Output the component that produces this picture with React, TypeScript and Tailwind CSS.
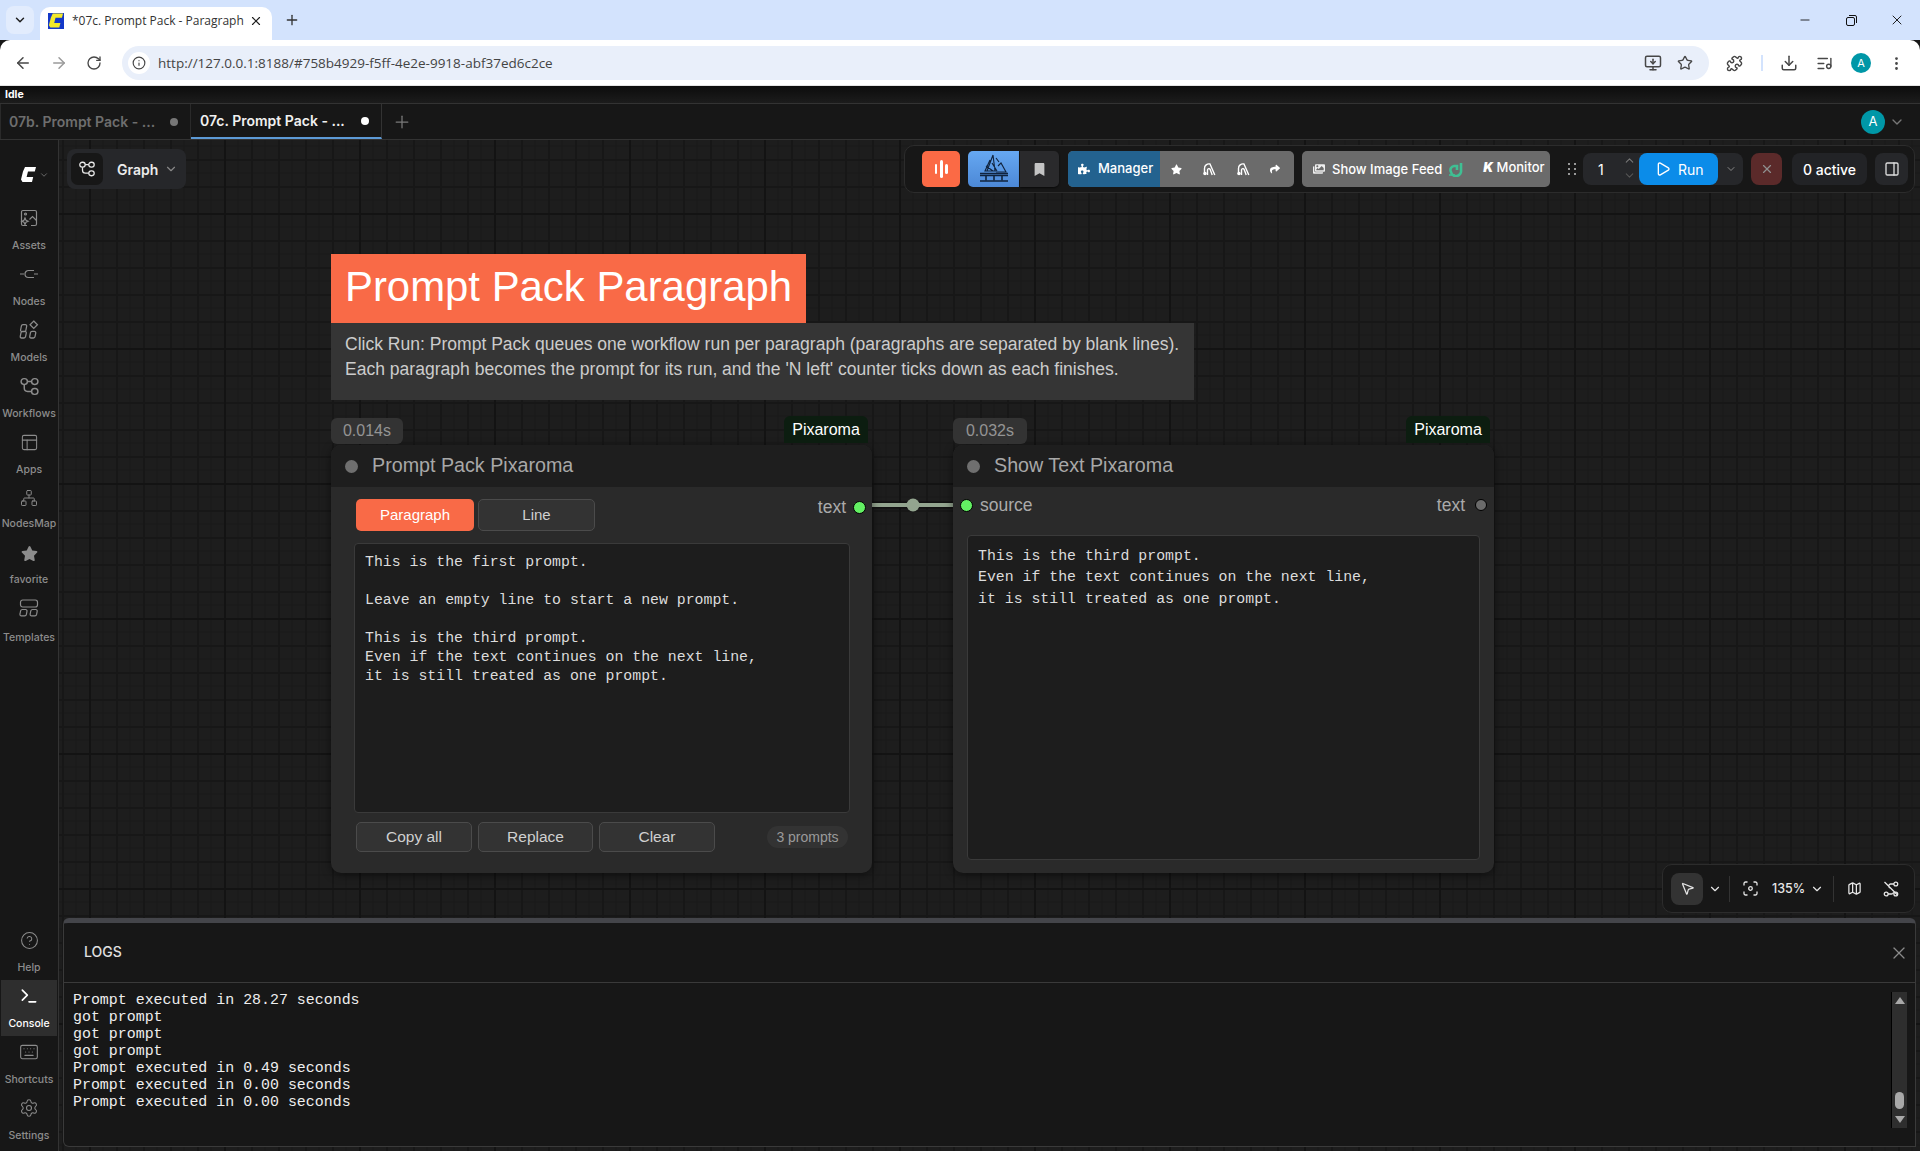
import React from "react";
import {
  ArrowLeft, ArrowRight, RotateCw, Info, Star, X, Plus, ChevronDown, ChevronUp, Minus, Download, Play, PanelRight,
  CircleHelp, Terminal, Keyboard, Settings, PanelsTopLeft, Network, MousePointer2, Map as MapIcon, EllipsisVertical, MonitorDown, Puzzle, ListMusic,
} from "lucide-react";
import { FaPuzzlePiece, FaStar, FaShare, FaBookmark, FaImages } from "react-icons/fa";

const GraphIcon = ({ size = 20 }: { size?: number }) => (
  <svg width={size} height={size} viewBox="0 0 20 20" fill="none" stroke="currentColor" strokeWidth="1.4">
    <rect x="2" y="2.5" width="6" height="5.5" rx="2.7" />
    <rect x="12" y="2.5" width="6" height="5.5" rx="2.7" />
    <rect x="12" y="12" width="6" height="5.5" rx="2.7" />
    <path d="M8 5.2h4M5 8v3.5a3.2 3.2 0 0 0 3.2 3.2H12" />
  </svg>
);
const AssetsIcon = () => (
  <svg width="18" height="18" viewBox="0 0 18 18" fill="none" stroke="currentColor" strokeWidth="1.2">
    <path d="M7 16.5H3a1.5 1.5 0 0 1-1.5-1.5V3A1.5 1.5 0 0 1 3 1.5h12A1.5 1.5 0 0 1 16.5 3v12a1.5 1.5 0 0 1-1.5 1.5h-4" />
    <path d="M9.5 10.5l3-3 4 4" />
    <circle cx="5.5" cy="5" r="1" />
    <path d="M5 9l1 2.2 2.2 1-2.2 1-1 2.3-1-2.3-2.2-1 2.2-1z" />
  </svg>
);
const NodesIcon = () => (
  <svg width="20" height="14" viewBox="0 0 20 14" fill="none" stroke="currentColor" strokeWidth="1.2">
    <path d="M1 7h4M15 7h4" />
    <path d="M15 3.5H9.5A3.5 3.5 0 0 0 6 7a3.5 3.5 0 0 0 3.5 3.5H15" />
  </svg>
);
const ModelsIcon = () => (
  <svg width="20" height="20" viewBox="0 0 19 19" fill="none" stroke="currentColor" strokeWidth="1.2">
    <path d="M3 7.5l.8-4a1.5 1.5 0 0 1 1.5-1.2h2.2a1.3 1.3 0 0 1 1.3 1.6l-.8 4a1.5 1.5 0 0 1-1.5 1.1H4.3A1.3 1.3 0 0 1 3 7.5z" transform="translate(-1.5 2)" />
    <path d="M1.2 15.5l.7-3.5a1.5 1.5 0 0 1 1.5-1.2h2.2a1.3 1.3 0 0 1 1.3 1.6l-.7 3.5a1.5 1.5 0 0 1-1.5 1.2H2.5a1.3 1.3 0 0 1-1.3-1.6z" />
    <path d="M10.2 15.5l.7-3.5a1.5 1.5 0 0 1 1.5-1.2h2.2a1.3 1.3 0 0 1 1.3 1.6l-.7 3.5a1.5 1.5 0 0 1-1.5 1.2h-2.2a1.3 1.3 0 0 1-1.3-1.6z" />
    <path d="M14 1l3.5 3.5L14 8l-3.5-3.5z" />
  </svg>
);
const TemplatesIcon = () => (
  <svg width="20" height="18" viewBox="0 0 20 18" fill="none" stroke="currentColor" strokeWidth="1.2">
    <rect x="1.5" y="1" width="17" height="7" rx="2.2" />
    <path d="M1 15l.6-3.2A1.8 1.8 0 0 1 3.4 10.5h3.2A1.4 1.4 0 0 1 8 12.2l-.6 3.2a1.8 1.8 0 0 1-1.8 1.4H2.4A1.4 1.4 0 0 1 1 15z" />
    <path d="M11.2 15l.6-3.2a1.8 1.8 0 0 1 1.8-1.3h3.2a1.4 1.4 0 0 1 1.4 1.7l-.6 3.2a1.8 1.8 0 0 1-1.8 1.4h-3.2a1.4 1.4 0 0 1-1.4-1.8z" />
  </svg>
);
const ComfyLogo = ({ className = "" }: { className?: string }) => (
  <svg width="17" height="18" viewBox="0 0 17 18" className={className}>
    <path d="M5 1h11l-1.2 4.5H8l-1.4 5.5h6.6L12 16 H2.5L1 13.5 3 5.5z" fill="currentColor" />
  </svg>
);
const Arch = () => (
  <svg width="14" height="14" viewBox="0 0 14 14" fill="none" stroke="#fff" strokeWidth="1.4">
    <path d="M2.5 12.5V6.5A4.5 4.5 0 0 1 8 2L12.8 13" />
    <path d="M5.5 13V8A1.4 1.4 0 0 1 8.2 7.5L10.2 13" />
    <circle cx="3" cy="11.5" r="1.7" fill="#fff" stroke="none" />
  </svg>
);
const SailIcon = () => (
  <svg width="32" height="30" viewBox="0 0 32 30" fill="none" stroke="#10233d" strokeWidth="1.1">
    <path d="M15 1L9 17M15 1l2 16M12 6l-5 11h11M18 4l3 4M20 12l3-3 5 9H18M14 9l5 8M8 12l7 5" />
    <path d="M2 19.5h28M2 21.5h28M2 27h28" strokeWidth="1.4" />
    <path d="M8 21.5v5M16 21.5v5M24 21.5v5" strokeWidth="1.6" />
  </svg>
);
const GreenMark = () => (
  <svg width="15" height="16" viewBox="0 0 15 16" fill="none" stroke="#3fbf93" strokeWidth="2.6">
    <path d="M13 2v7a5 5 0 0 1-10 2 4 4 0 0 1 3-6h3v4" />
    <path d="M1 14h6" strokeWidth="1.6" />
  </svg>
);
const LinkOff = () => (
  <svg width="16" height="16" viewBox="0 0 16 16" fill="none" stroke="currentColor" strokeWidth="1.3">
    <circle cx="3.2" cy="13" r="1.9" /><circle cx="12.8" cy="3" r="1.9" /><circle cx="12.8" cy="13" r="1.9" />
    <path d="M1.5 1l13 13M11 3H7.5a2 2 0 0 0-.5 3.8M5 13h3.5a2 2 0 0 0 2-1.8" />
  </svg>
);
const FocusIcon = () => (
  <svg width="15" height="15" viewBox="0 0 15 15" fill="none" stroke="currentColor" strokeWidth="1.3">
    <path d="M1 4.5V2.5A1.5 1.5 0 0 1 2.5 1h2M10.5 1h2A1.5 1.5 0 0 1 14 2.5v2M14 10.5v2a1.5 1.5 0 0 1-1.5 1.5h-2M4.5 14h-2A1.5 1.5 0 0 1 1 12.5v-2" />
    <circle cx="7.5" cy="7.5" r="1.8" />
  </svg>
);

function SideItem({ icon, label, active = false, h }: { icon: React.ReactNode; label: string; active?: boolean; h: string }) {
  return (
    <div className={`flex flex-col items-center justify-between pt-[3px] pb-[5px] w-[56px] ${h} ${active ? "bg-[#2e2e2e] text-white" : "text-[#8c8c8c]"}`}>
      <div className="h-[26px] flex items-center justify-center">{icon}</div>
      <div className="text-[10.5px] leading-[14px] whitespace-nowrap font-medium">{label}</div>
    </div>
  );
}

const mono = "font-['Liberation_Mono',monospace]";
const arial = "font-['Liberation_Sans',Arial,sans-serif]";

function NodeBtn({ children, w = "w-[116px]" }: { children: React.ReactNode; w?: string }) {
  return (
    <div className={`${w} shrink-0 h-[30px] flex items-center justify-center rounded-[5px] border border-[#4b4b4b] bg-[#333333] text-[#d0d0d0] text-[15.5px]`}>
      {children}
    </div>
  );
}

function Node({ left, time, title, timeW, children }: { left: string; time: string; title: string; timeW: string; children: React.ReactNode }) {
  return (
    <div className={`absolute top-[305px] ${left} w-[541px] h-[428px] rounded-[10px] bg-[#2a2a2a] shadow-[0_2px_8px_rgba(0,0,0,0.5)] flex flex-col ${arial}`}>
      <div className={`absolute -top-[27px] left-0 h-[26px] ${timeW} rounded-[6px] bg-[#333333] text-[#949494] text-[16px] flex items-center justify-center`}>{time}</div>
      <div className="absolute -top-[29px] right-[4px] w-[84px] h-[27px] rounded-t-[6px] bg-[#0c1d10] text-white text-[16px] flex items-center justify-center">Pixaroma</div>
      <div className="h-[42px] shrink-0 rounded-t-[10px] bg-[#1e1e1e] flex items-center pl-[14px] gap-[14px]">
        <div className="w-[13px] h-[13px] rounded-full bg-[#6f6f6f]" />
        <div className="text-[#a8a8a8] text-[19.7px]">{title}</div>
      </div>
      {children}
    </div>
  );
}

export default function App() {
  return (
    <div className="w-[1920px] h-[1151px] overflow-hidden flex flex-col bg-[#171717] font-['Inter',sans-serif]">
      {/* browser tab strip */}
      <div className="h-[40px] shrink-0 bg-[#d3e3fd] flex items-end pl-[6px] font-['Open_Sans',sans-serif] text-[#1f1f1f]">
        <div className="w-[28px] h-[28px] mb-[6px] rounded-[8px] bg-[#e2ecfd] flex items-center justify-center"><ChevronDown size={14} strokeWidth={2.5} /></div>
        <div className="ml-[6px] w-[232px] h-[33px] bg-white rounded-t-[10px] flex items-center pl-[8px] pr-[9px] pb-[6px]">
          <div className="w-[16px] h-[16px] bg-[#1438c8] flex items-center justify-center text-[#f4e92a] mr-[8px] shrink-0"><ComfyLogo /></div>
          <div className="flex-1 text-[12px] whitespace-nowrap overflow-hidden text-[#333]">*07c. Prompt Pack - Paragraph</div>
          <X size={14} className="ml-[4px] shrink-0" />
        </div>
        <div className="ml-[12px] mb-[12px] text-[#333]"><Plus size={16} /></div>
        <div className="flex-1" />
        <div className="self-start pt-[12px] flex items-center text-[#111]">
          <div className="w-[46px] flex justify-center"><Minus size={14} strokeWidth={1.5} /></div>
          <div className="w-[46px] flex justify-center">
            <svg width="11" height="11" viewBox="0 0 11 11" fill="none" stroke="currentColor"><rect x="0.5" y="2.5" width="8" height="8" rx="1.5" /><path d="M3 .5h6a1.5 1.5 0 0 1 1.5 1.5v6" /></svg>
          </div>
          <div className="w-[46px] flex justify-center"><X size={16} strokeWidth={1.4} /></div>
        </div>
      </div>
      {/* browser toolbar */}
      <div className="h-[46px] shrink-0 bg-white pt-[1px] rounded-t-[10px] flex items-center text-[#474747] border-b border-[#e4e4e4]">
        <div className="w-[122px] shrink-0 flex items-center pl-[14px] gap-[18px]">
          <ArrowLeft size={18} /><ArrowRight size={18} className="text-[#9a9a9a]" /><RotateCw size={16} />
        </div>
        <div className="w-[1587px] shrink-0 h-[34px] rounded-full bg-[#e9effa] flex items-center pl-[6px] pr-[16px]">
          <div className="w-[22px] h-[22px] rounded-full bg-white flex items-center justify-center"><Info size={14} /></div>
          <div className="ml-[8px] flex-1 text-[13.5px] font-['Open_Sans',sans-serif] text-[#444]">http://127.0.0.1:8188/#758b4929-f5ff-4e2e-9918-abf37ed6c2ce</div>
          <MonitorDown size={18} className="mr-[15px]" /><Star size={16} />
        </div>
        <div className="flex-1 flex items-center">
          <Puzzle size={17} className="ml-[17px]" />
          <div className="w-[2px] h-[16px] bg-[#d3e3fd] ml-[18px]" />
          <Download size={18} className="ml-[17px]" />
          <ListMusic size={17} className="ml-[18px]" />
          <div className="ml-[18px] w-[20px] h-[20px] rounded-full bg-[#0097a7] text-white text-[11px] flex items-center justify-center">A</div>
          <EllipsisVertical size={17} className="ml-[17px]" />
        </div>
      </div>
      {/* idle strip */}
      <div className="h-[17px] shrink-0 bg-[linear-gradient(#0c0c0c,#1c1c1c)] pl-[5px] text-[10.5px] leading-[18px] font-bold text-white">Idle</div>
      {/* comfy tabs */}
      <div className="h-[37px] shrink-0 bg-[#171717] border-y border-[#333333] flex items-stretch text-[14px] font-semibold">
        <div className="w-[191px] border-x border-[#2a2a2a] flex items-center pl-[8px] text-[#6e6e6e]">
          <span className="flex-1">07b. Prompt Pack - ...</span>
          <span className="w-[8px] h-[8px] rounded-full bg-[#777] mr-[12px]" />
        </div>
        <div className="w-[191px] border-r border-[#333] border-b-2 border-b-[#5d9ad6] flex items-center pl-[9px] text-[#f0f0f0]">
          <span className="flex-1">07c. Prompt Pack - ...</span>
          <span className="w-[8px] h-[8px] rounded-full bg-white mr-[12px]" />
        </div>
        <div className="ml-[10px] flex items-center text-[#7a7a7a]"><Plus size={20} strokeWidth={1.5} /></div>
        <div className="flex-1" />
        <div className="flex items-center pr-[15px] gap-[4px]">
          <div className="w-[24px] h-[24px] rounded-full bg-[#0097a7] text-white text-[13px] font-normal flex items-center justify-center">A</div>
          <ChevronDown size={16} className="text-[#777]" />
        </div>
      </div>
      {/* main */}
      <div className="flex-1 min-h-0 flex">
        {/* sidebar */}
        <div className="w-[59px] shrink-0 bg-[#171717] border-r border-[#333333] flex flex-col items-center">
          <div className="h-[62px] w-full flex items-center pt-[8px] pl-[20px] gap-[2px] text-white shrink-0">
            <ComfyLogo />
            <ChevronDown size={10} className="text-[#777]" />
          </div>
          <div className="flex flex-col">
            <SideItem h="h-[56px]" icon={<AssetsIcon />} label="Assets" />
            <SideItem h="h-[56px]" icon={<NodesIcon />} label="Nodes" />
            <SideItem h="h-[56px]" icon={<ModelsIcon />} label="Models" />
            <SideItem h="h-[56px]" icon={<GraphIcon size={21} />} label="Workflows" />
            <SideItem h="h-[56px]" icon={<PanelsTopLeft size={19} strokeWidth={1.3} />} label="Apps" />
            <SideItem h="h-[54px]" icon={<Network size={18} strokeWidth={1.3} />} label="NodesMap" />
            <SideItem h="h-[56px]" icon={<FaStar size={17} className="mt-[3px]" />} label="favorite" />
            <SideItem h="h-[58px]" icon={<TemplatesIcon />} label="Templates" />
          </div>
          <div className="flex-1" />
          <div className="flex flex-col pb-[3px]">
            <SideItem h="h-[56px]" icon={<CircleHelp size={19} strokeWidth={1.3} />} label="Help" />
            <SideItem h="h-[56px]" active icon={<Terminal size={20} />} label="Console" />
            <SideItem h="h-[56px]" icon={<Keyboard size={20} strokeWidth={1.3} />} label="Shortcuts" />
            <SideItem h="h-[56px]" icon={<Settings size={20} strokeWidth={1.3} />} label="Settings" />
          </div>
        </div>
        {/* canvas column */}
        <div className="flex-1 min-w-0 flex flex-col bg-[#1d1d1d] bg-[linear-gradient(to_right,#131313_2px,transparent_2px),linear-gradient(to_bottom,#131313_2px,transparent_2px),linear-gradient(to_right,#171717_2px,transparent_2px),linear-gradient(to_bottom,#171717_2px,transparent_2px),linear-gradient(to_right,#191919_1px,transparent_1px),linear-gradient(to_bottom,#191919_1px,transparent_1px)] bg-[size:135px_135px,135px_135px,27px_27px,27px_27px,13.5px_13.5px,13.5px_13.5px] bg-[position:30px_73px,30px_73px,3px_19px,3px_19px,3px_5.5px,3px_5.5px]">
          <div className="flex-1 relative">
            {/* graph pill */}
            <div className="absolute left-[8px] top-[9px] w-[119px] h-[40px] rounded-[8px] bg-[#26272a] flex items-center pl-[4px] text-white">
              <div className="w-[32px] h-[32px] rounded-[7px] bg-[#171717] flex items-center justify-center text-[#e8e8e8]"><GraphIcon size={18} /></div>
              <span className="ml-[14px] text-[14px] font-semibold text-[#ececec]">Graph</span>
              <ChevronDown size={14} className="ml-[6px] text-[#888]" />
            </div>
            {/* top toolbar */}
            <div className="absolute left-[845px] top-[5px] w-[1011px] h-[48px] rounded-[10px] border border-[#2c2c2c] bg-[#171717] flex items-center pl-[17px] text-white text-[13px] whitespace-nowrap">
              <div className="w-[38px] h-[36px] shrink-0 rounded-[5px] bg-[#fb6a45] flex items-center justify-center gap-[2.5px]">
                <span className="w-[2.5px] h-[10px] bg-white rounded-full" /><span className="w-[3px] h-[18px] bg-white rounded-full" /><span className="w-[2.5px] h-[10px] bg-white rounded-full" />
              </div>
              <div className="ml-[8px] w-[51px] h-[36px] shrink-0 rounded-l-[5px] bg-[linear-gradient(#66a8f2,#4c88d6)] flex items-center justify-center"><SailIcon /></div>
              <div className="ml-[1px] w-[39px] h-[36px] shrink-0 rounded-r-[5px] bg-[#2a2a2c] shadow-[0_1px_2px_rgba(0,0,0,0.6)] flex items-center justify-center text-[#c4c4c4]"><FaBookmark size={13} /></div>
              <div className="ml-[9px] w-[226px] h-[36px] shrink-0 rounded-[5px] bg-[#6b6b6b] flex items-stretch overflow-hidden">
                <div className="w-[92px] bg-[#23628f] flex items-center pl-[10px] gap-[8px] font-medium"><FaPuzzlePiece size={12} /><span>Manager</span></div>
                <div className="flex-1 flex items-center pl-[11px] gap-[20px]">
                  <FaStar size={11} /><Arch /><Arch /><FaShare size={10} />
                </div>
              </div>
              <div className="ml-[8px] w-[248px] h-[36px] shrink-0 rounded-[5px] bg-[#6b6b6b] flex items-center pl-[11px] font-medium">
                <FaImages size={12} className="text-[#eee]" />
                <span className="ml-[7px] mt-[2px]">Show Image Feed</span>
                <span className="ml-[6px]"><GreenMark /></span>
                <span className="ml-[20px] mb-[2px]"><b className="italic font-black">K</b> Monitor</span>
              </div>
              <div className="ml-[18px] w-[8px] shrink-0 grid grid-cols-2 gap-x-[3px] gap-y-[3px]">
                {[0, 1, 2, 3, 4, 5].map((i) => <span key={i} className="w-[2px] h-[2px] bg-[#999]" />)}
              </div>
              <div className="ml-[7px] h-[32px] w-[160px] shrink-0 rounded-[8px] bg-[#26272a] flex items-stretch">
                <div className="w-[56px] flex items-center pl-[15px] relative text-[14px]">1
                  <div className="absolute right-[3px] top-[1px] flex flex-col text-[#777]"><ChevronUp size={13} /><ChevronDown size={13} className="mt-[2px] text-[#555]" /></div>
                </div>
                <div className="w-[79px] bg-[#0b8ce9] rounded-[8px] flex items-center pl-[16px] gap-[7px] text-[14px]"><Play size={16} /><span>Run</span></div>
                <div className="flex-1 flex items-center justify-center text-[#888]"><ChevronDown size={12} /></div>
              </div>
              <div className="ml-[8px] w-[31px] h-[32px] shrink-0 rounded-[8px] bg-[#5b2a2a] flex items-center justify-center text-[#8f8f8f]"><X size={14} /></div>
              <div className="ml-[10px] w-[75px] h-[32px] shrink-0 rounded-[8px] bg-[#222326] flex items-center justify-center text-[14px] font-medium">0 active</div>
              <div className="ml-[8px] w-[33px] h-[32px] shrink-0 rounded-[8px] bg-[#26272a] flex items-center justify-center text-[#ddd]"><PanelRight size={16} /></div>
            </div>

            {/* note */}
            <div className={`absolute left-[272px] top-[114px] ${arial}`}>
              <div className="w-[475px] h-[69px] pb-[3px] bg-[#f96a47] text-white text-[41.9px] flex items-center justify-center whitespace-nowrap">Prompt Pack Paragraph</div>
              <div className="w-[863px] h-[77px] bg-[#353535] text-[#cccccc] text-[17.55px] leading-[25px] pt-[9px] pl-[14px] whitespace-nowrap">
                <div>Click Run: Prompt Pack queues one workflow run per paragraph (paragraphs are separated by blank lines).</div>
                <div>Each paragraph becomes the prompt for its run, and the 'N left' counter ticks down as each finishes.</div>
              </div>
            </div>

            {/* link */}
            <svg className="absolute left-[813px] top-[355px]" width="81" height="20" viewBox="0 0 81 20">
              <path d="M0 10h81" stroke="#111" strokeWidth="7" />
              <path d="M0 10h81" stroke="#93a58f" strokeWidth="4" />
              <circle cx="41" cy="10" r="6.5" fill="#93a58f" />
            </svg>

            {/* node 1 */}
            <Node left="left-[272px]" time="0.014s" timeW="w-[72px]" title="Prompt Pack Pixaroma">
              <div className="flex-1 px-[23px] pt-[12px] flex flex-col min-h-0 relative">
                <div className="absolute right-[1px] top-[7px] flex items-center gap-[7px] text-[#aaaaaa] text-[17.5px]">
                  text<span className="w-[11px] h-[11px] rounded-full bg-[#63f063] border border-black box-content mr-[5px]" />
                </div>
                <div className="flex gap-[4px] ml-[2px]">
                  <div className="w-[118px] h-[32px] rounded-[5px] bg-[#f96a47] text-white text-[15px] flex items-center justify-center">Paragraph</div>
                  <div className="w-[117px] h-[32px] rounded-[5px] border border-[#4b4b4b] bg-[#333333] text-[#d0d0d0] text-[15px] flex items-center justify-center">Line</div>
                </div>
                <div className={`mt-[12px] h-[270px] w-[496px] rounded-[4px] border border-[#3a3a3a] bg-[#1d1d1d] pt-[9px] pl-[10px] text-[14.85px] leading-[19px] text-[#dcdcdc] ${mono}`}>
                  <div>This is the first prompt.</div>
                  <div>&nbsp;</div>
                  <div>Leave an empty line to start a new prompt.</div>
                  <div>&nbsp;</div>
                  <div>This is the third prompt.</div>
                  <div>Even if the text continues on the next line,</div>
                  <div>it is still treated as one prompt.</div>
                </div>
                <div className="mt-[9px] ml-[2px] flex gap-[6px] items-center">
                  <NodeBtn>Copy all</NodeBtn>
                  <NodeBtn w="w-[115px]">Replace</NodeBtn>
                  <NodeBtn>Clear</NodeBtn>
                  <div className="ml-[46px] shrink-0 w-[81px] h-[22px] rounded-full bg-[#333333] text-[#9a9a9a] text-[14px] flex items-center justify-center">3 prompts</div>
                </div>
              </div>
            </Node>

            {/* node 2 */}
            <Node left="left-[894px]" time="0.032s" timeW="w-[74px]" title="Show Text Pixaroma">
              <div className="flex-1 flex flex-col min-h-0 pt-[5px]">
                <div className="h-[26px] flex items-center text-[17.5px] text-[#aaaaaa]">
                  <span className="ml-[7px] w-[11px] h-[11px] rounded-full bg-[#63f063] border border-black box-content" />
                  <span className="ml-[7px] flex-1">source</span>
                  <span>text</span>
                  <span className="ml-[10px] mr-[7px] w-[10px] h-[10px] rounded-full bg-[#6b6b6b] border border-black box-content" />
                </div>
                <div className={`mt-[17px] ml-[14px] w-[513px] h-[325px] rounded-[4px] border border-[#3a3a3a] bg-[#1d1d1d] pt-[10px] pl-[10px] text-[14.85px] leading-[21.4px] text-[#dcdcdc] ${mono}`}>
                  <div>This is the third prompt.</div>
                  <div>Even if the text continues on the next line,</div>
                  <div>it is still treated as one prompt.</div>
                </div>
              </div>
            </Node>

            {/* canvas controls */}
            <div className="absolute left-[1603px] top-[724px] w-[253px] h-[49px] rounded-[10px] border border-[#2c2c2c] bg-[#171717] flex items-center pl-[8px] text-[#e6e6e6]">
              <div className="w-[32px] h-[32px] rounded-[8px] bg-[#333333] flex items-center justify-center"><MousePointer2 size={15} /></div>
              <ChevronDown size={14} className="ml-[5px]" />
              <div className="ml-[7px] w-px h-[26px] bg-[#333]" />
              <div className="ml-[13px]"><FocusIcon /></div>
              <span className="ml-[14px] pt-[1px] text-[12.5px] font-medium">135%</span>
              <ChevronDown size={14} className="ml-[5px]" />
              <div className="ml-[9px] w-px h-[26px] bg-[#333]" />
              <MapIcon size={15} className="ml-[13px]" />
              <div className="ml-[21px]"><LinkOff /></div>
            </div>
          </div>

          {/* logs panel */}
          <div className="h-[229px] shrink-0 ml-[4px] mr-[4px] mb-[4px] rounded-t-[6px] rounded-bl-[6px] border-x border-b border-[#3a3a3a] border-t-[5px] border-t-[#44454a] bg-[#171717] flex flex-col">
            <div className="h-[60px] shrink-0 border-b border-[#3a3a3a] flex items-center justify-between pl-[20px] pr-[6px]">
              <span className="text-[14px] font-medium text-[#e0e0e0] pb-[2px]">LOGS</span>
              <X size={20} strokeWidth={1.5} className="text-[#8a8a8a]" />
            </div>
            <div className="flex-1 min-h-0 flex pt-[9px] relative">
              <div className={`flex-1 pl-[9px] text-[14.93px] leading-[17px] text-[#eeeeee] ${mono}`}>
                <div>Prompt executed in 28.27 seconds</div>
                <div>got prompt</div>
                <div>got prompt</div>
                <div>got prompt</div>
                <div>Prompt executed in 0.49 seconds</div>
                <div>Prompt executed in 0.00 seconds</div>
                <div>Prompt executed in 0.00 seconds</div>
              </div>
              <div className="w-[16px] h-[136px] mr-[8px] border-l border-black bg-[#2e2e2e] flex flex-col items-center justify-between py-[5px]">
                <div className="w-0 h-0 border-x-[5px] border-x-transparent border-b-[7px] border-b-[#a8a8a8]" />
                <div className="flex flex-col items-center gap-[7px]">
                  <div className="w-[9px] h-[17px] rounded-full bg-[#a8a8a8]" />
                  <div className="w-0 h-0 border-x-[5px] border-x-transparent border-t-[7px] border-t-[#a8a8a8]" />
                </div>
              </div>
            </div>
          </div>
        </div>
      </div>
    </div>
  );
}
